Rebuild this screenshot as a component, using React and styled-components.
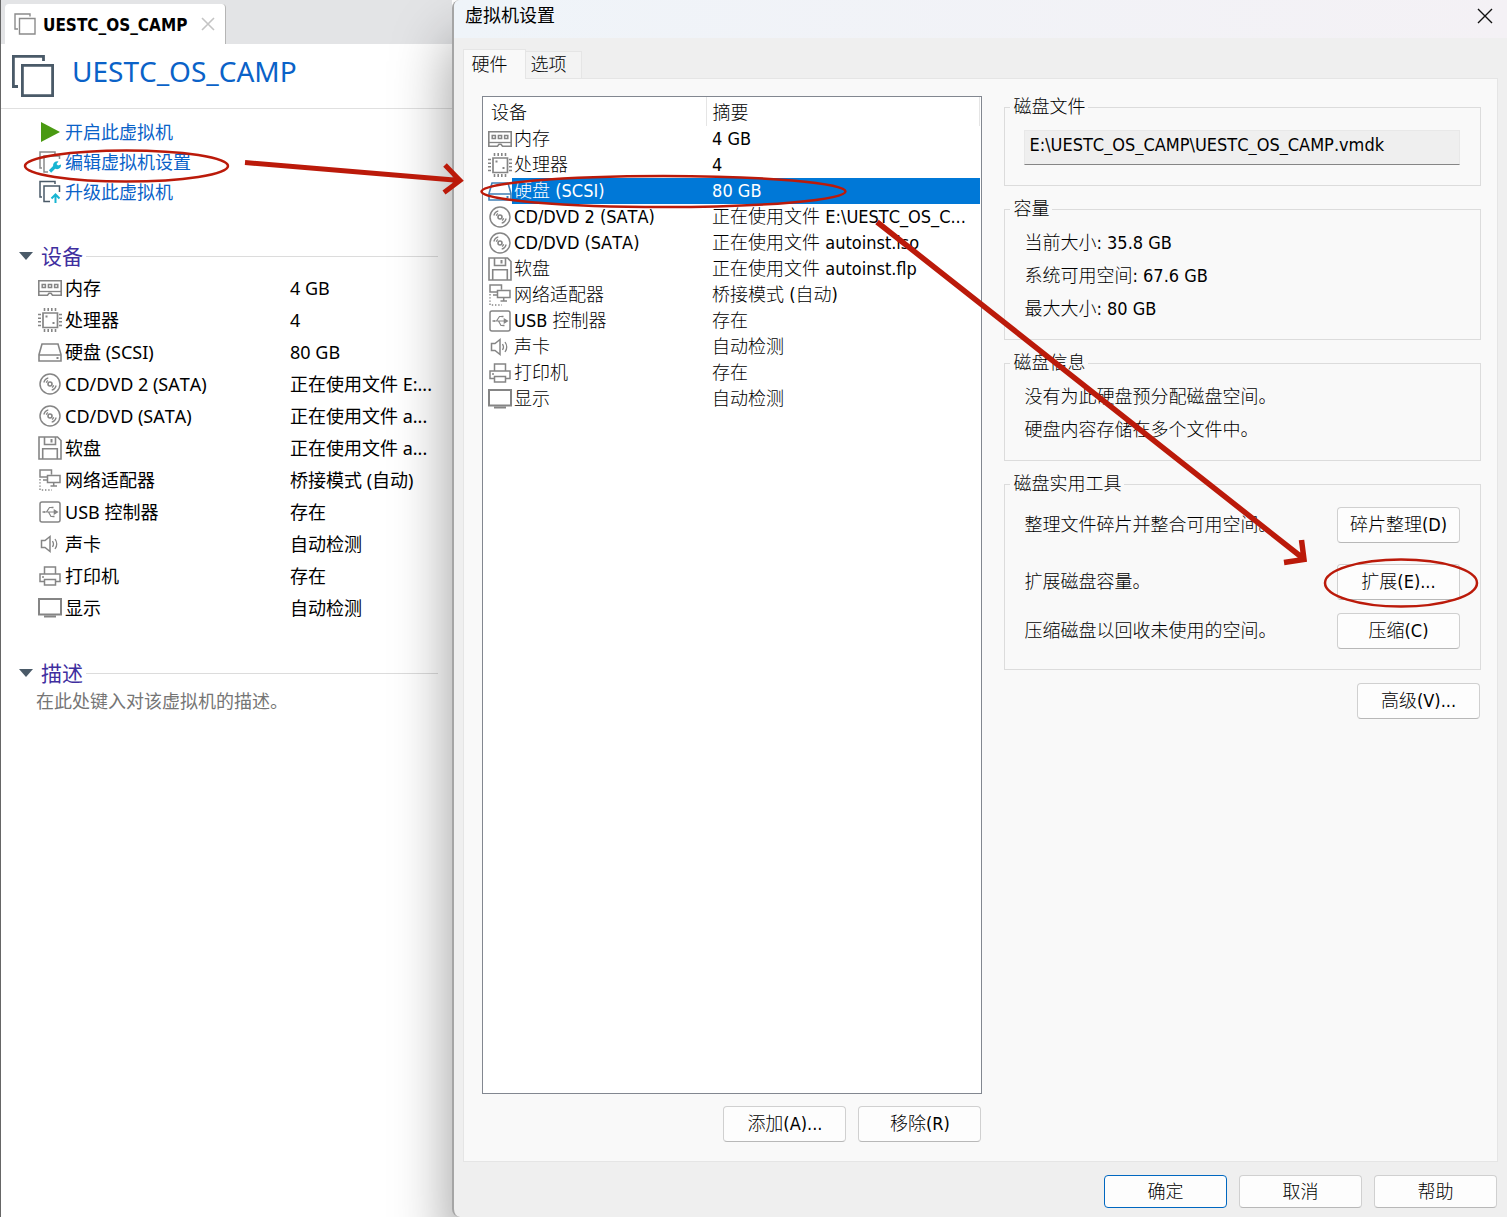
import React, { useState } from 'react';
import styled, { createGlobalStyle, css } from 'styled-components';

const UI_FONT = '"Noto Sans", "Noto Sans CJK SC", sans-serif';
const DIALOG_FONT = '"DejaVu Sans Condensed", "Noto Sans CJK SC", sans-serif';

const devices = [
    { icon: 'memory', name: '内存', short: '4 GB', summary: '4 GB' },
    { icon: 'cpu', name: '处理器', short: '4', summary: '4' },
    { icon: 'disk', name: '硬盘 (SCSI)', short: '80 GB', summary: '80 GB' },
    { icon: 'cd', name: 'CD/DVD 2 (SATA)', short: '正在使用文件 E:...', summary: '正在使用文件 E:\\UESTC_OS_C...' },
    { icon: 'cd', name: 'CD/DVD (SATA)', short: '正在使用文件 a...', summary: '正在使用文件 autoinst.iso' },
    { icon: 'floppy', name: '软盘', short: '正在使用文件 a...', summary: '正在使用文件 autoinst.flp' },
    { icon: 'network', name: '网络适配器', short: '桥接模式 (自动)', summary: '桥接模式 (自动)' },
    { icon: 'usb', name: 'USB 控制器', short: '存在', summary: '存在' },
    { icon: 'sound', name: '声卡', short: '自动检测', summary: '自动检测' },
    { icon: 'printer', name: '打印机', short: '存在', summary: '存在' },
    { icon: 'display', name: '显示', short: '自动检测', summary: '自动检测' },
];

const shapes = {
    memory: (
        <>
            <path d="M.8 4.8h22.4v14.4h-8.7L13 17.2h-2l-1.500 2H.8z" strokeWidth="1.6" />
            <path d="M1 15.5h22" strokeWidth="1.3" />
            <path d="M4.2 8.5h3.200v3H4.200zM10.400 8.500h3.200v3h-3.200zM16.600 8.500h3.200v3h-3.200z" strokeWidth="1.5" />
        </>
    ),
    cpu: (
        <>
            <path d="M5 5h14.5v14.5H5z" strokeWidth="1.7" />
            <path d="M6.5 0v3M10.2 0v3M13.8 0v3M17.5 0v3M6.5 21v3M10.2 21v3M13.8 21v3M17.5 21v3M0 6.5h3M0 10.2h3M0 13.8h3M0 17.5h3M21 6.5h3M21 10.2h3M21 13.8h3M21 17.5h3" strokeWidth="1.6" />
            <path d="M7.5 8.5h2M14.5 15h2" />
        </>
    ),
    disk: (
        <>
            <path d="M4 4h16l3 10.5V21H1v-6.5zM1 15h22" strokeWidth="1.6" />
            <path d="M18.5 18h2" />
        </>
    ),
    cd: (
        <>
            <circle cx="12" cy="12" r="10" strokeWidth="1.5" />
            <circle cx="12" cy="12" r="2" strokeWidth="1.6" />
            <path d="M5.8 10.5a6.500 6.500 0 0 1 4.500-4.700M8.300 10.700a4 4 0 0 1 1.700-2.200M18.200 13.500a6.500 6.500 0 0 1-4.500 4.700M15.700 13.300a4 4 0 0 1-1.700 2.200" strokeWidth="1.2" />
        </>
    ),
    floppy: (
        <>
            <path d="M1 1h18.5L23 4.5V23H1z" strokeWidth="1.6" />
            <path d="M6.5 1v7.5h11V1M4.7 23V12.7h14.6V23" strokeWidth="1.6" />
            <path d="M13.5 3v3.5" />
        </>
    ),
    network: (
        <>
            <path d="M9.5 9H2V2h11.5v4.5M9.5 7.5H22v7H9.500z" strokeWidth="1.5" />
            <path d="M15.7 14.5v3M12.500 18h6.500M5 12h4" strokeWidth="1.5" />
            <path d="M2 11v11h12" strokeWidth="1.4" strokeDasharray="1.4 1.8" />
        </>
    ),
    usb: (
        <>
            <rect x="2" y="2" width="20" height="20" rx="2" strokeWidth="1.5" />
            <path d="M6 12h12M8.500 12l3-4.500H14M10.500 12l2.500 4.500h2" strokeWidth="1.2" />
            <path d="M4.500 12h2.500M16.500 10.500l2.500 1.500-2.500 1.500zM13.500 7.500h2M14.500 16.500h2" strokeWidth="1.6" />
        </>
    ),
    sound: (
        <>
            <path d="M3.500 8.500h3.500L12 4.500v15L7 15.500H3.500z" strokeWidth="1.5" />
            <path d="M14.500 9q2 3 0 6M17 7q3.500 5 0 10" strokeWidth="1.3" />
        </>
    ),
    printer: (
        <>
            <path d="M6.500 10V3h11v7M6.500 17.500H2V10h20v7.500h-4.500" strokeWidth="1.5" />
            <path d="M6.500 15.500h11V21h-11z" strokeWidth="1.5" />
            <path d="M4 13h2" strokeWidth="1.3" />
        </>
    ),
    display: (
        <>
            <path d="M1 3h22v15.500H1z" />
            <path d="M6 20.500h12" />
        </>
    ),
};

function DeviceIcon({ name, active }) {
    return (
        <IconSvg viewBox="0 0 24 24" $active={active} aria-hidden="true">
            {shapes[name]}
        </IconSvg>
    );
}

function VmPanel() {
    return (
        <Machine>
            <TabStrip>
                <VmTab>
                    <svg width="22" height="22" viewBox="0 0 22 22" fill="none" stroke="#8b8b8b" strokeWidth="1.4" aria-hidden="true">
                        <path d="M4 16H1V1h15v2.500M5.500 5.500H21V21H5.500z" />
                    </svg>
                    <VmTabName>UESTC_OS_CAMP</VmTabName>
                    <TabClose aria-label="关闭标签页">
                        <svg width="14" height="14" viewBox="0 0 14 14" stroke="#c4c4c4" strokeWidth="1.6" aria-hidden="true">
                            <path d="M1 1l12 12M13 1L1 13" />
                        </svg>
                    </TabClose>
                </VmTab>
            </TabStrip>
            <VmHeader>
                <svg width="42" height="42" viewBox="0 0 42 42" fill="none" stroke="#4a5a68" strokeWidth="2.8" aria-hidden="true">
                    <path d="M6 31.500H1.400V1.400h30.100V6M10.400 10.400h30.200v30.200H10.400z" />
                </svg>
                <VmTitle>UESTC_OS_CAMP</VmTitle>
            </VmHeader>
            <Actions>
                <ActionLink href="#power">
                    <svg width="24" height="24" viewBox="0 0 24 24" aria-hidden="true">
                        <path d="M3 2l19 10L3 22z" fill="#4a9a12" />
                    </svg>
                    开启此虚拟机
                </ActionLink>
                <ActionLink href="#settings">
                    <svg width="24" height="24" viewBox="0 0 24 24" fill="none" aria-hidden="true">
                        <path d="M4 18H2V2h15v2M10 22H6V6h15.500v3" stroke="#8b8b8b" strokeWidth="1.5" />
                        <path d="M12 21.500l6-6" stroke="#18b5d2" strokeWidth="3.2" />
                        <path d="M20.500 11.500a4 4 0 1 0 2.500 3l-3 1-1.500-1.500z" fill="#18b5d2" />
                    </svg>
                    编辑虚拟机设置
                </ActionLink>
                <ActionLink href="#upgrade">
                    <svg width="24" height="24" viewBox="0 0 24 24" fill="none" aria-hidden="true">
                        <path d="M4 17H2V1.500h15V4M12 21.500H6V6h15.500v6" stroke="#4a5a68" strokeWidth="1.5" />
                        <path d="M17.500 23v-8M13.500 18.500l4-4 4 4" stroke="#18b5d2" strokeWidth="2" />
                    </svg>
                    升级此虚拟机
                </ActionLink>
            </Actions>
            <SectionHead>
                <Caret aria-hidden="true" />
                设备
            </SectionHead>
            <VmTable>
                <tbody>
                    {devices.map((d) => (
                        <tr key={d.name}>
                            <VmName scope="row">
                                <IconLabel>
                                    <DeviceIcon name={d.icon} />
                                    <VmLabel>{d.name}</VmLabel>
                                </IconLabel>
                            </VmName>
                            <VmValue>{d.short}</VmValue>
                        </tr>
                    ))}
                </tbody>
            </VmTable>
            <SectionHead>
                <Caret aria-hidden="true" />
                描述
            </SectionHead>
            <Description aria-label="描述" placeholder="在此处键入对该虚拟机的描述。" />
        </Machine>
    );
}

function SettingsDialog() {
    const [selected, setSelected] = useState(2);

    return (
        <Dialog role="dialog" aria-labelledby="dialog-title">
            <TitleBar>
                <DialogTitle id="dialog-title">虚拟机设置</DialogTitle>
                <CloseButton aria-label="关闭">
                    <svg width="16" height="16" viewBox="0 0 16 16" stroke="#111" strokeWidth="1.4" aria-hidden="true">
                        <path d="M1 1l14 14M15 1L1 15" />
                    </svg>
                </CloseButton>
            </TitleBar>
            <Tabs role="tablist">
                <Tab role="tab" aria-selected="true" $active>硬件</Tab>
                <Tab role="tab" aria-selected="false">选项</Tab>
            </Tabs>
            <Panel>
                <ListColumn>
                    <ListBox>
                        <DeviceTable>
                            <thead>
                                <tr>
                                    <HeadCell scope="col" $wide>设备</HeadCell>
                                    <HeadCell scope="col">摘要</HeadCell>
                                </tr>
                            </thead>
                            <tbody>
                                {devices.map((d, i) => (
                                    <DeviceRow key={d.name} $active={i === selected} onClick={() => setSelected(i)}>
                                        <NameCell>
                                            <IconLabel>
                                                <DeviceIcon name={d.icon} active={i === selected} />
                                                <RowLabel $active={i === selected}>{d.name}</RowLabel>
                                            </IconLabel>
                                        </NameCell>
                                        <SummaryCell>{d.summary}</SummaryCell>
                                    </DeviceRow>
                                ))}
                            </tbody>
                        </DeviceTable>
                    </ListBox>
                    <ButtonBar>
                        <Button>添加(A)...</Button>
                        <Button>移除(R)</Button>
                    </ButtonBar>
                </ListColumn>
                <DetailColumn>
                    <Group>
                        <Legend>磁盘文件</Legend>
                        <GroupBody $tool>
                            <FileField aria-label="磁盘文件" readOnly value="E:\UESTC_OS_CAMP\UESTC_OS_CAMP.vmdk" />
                        </GroupBody>
                    </Group>
                    <Group>
                        <Legend>容量</Legend>
                        <GroupBody>
                            <Line>当前大小: 35.8 GB</Line>
                            <Line>系统可用空间: 67.6 GB</Line>
                            <Line>最大大小: 80 GB</Line>
                        </GroupBody>
                    </Group>
                    <Group>
                        <Legend>磁盘信息</Legend>
                        <GroupBody>
                            <Line>没有为此硬盘预分配磁盘空间。</Line>
                            <Line>硬盘内容存储在多个文件中。</Line>
                        </GroupBody>
                    </Group>
                    <Group>
                        <Legend>磁盘实用工具</Legend>
                        <GroupBody $tool>
                            <ToolRow $spaced>
                                整理文件碎片并整合可用空间。
                                <Button>碎片整理(D)</Button>
                            </ToolRow>
                            <ToolRow>
                                扩展磁盘容量。
                                <Button>扩展(E)...</Button>
                            </ToolRow>
                            <ToolRow>
                                压缩磁盘以回收未使用的空间。
                                <Button>压缩(C)</Button>
                            </ToolRow>
                        </GroupBody>
                    </Group>
                    <ButtonBar $tight>
                        <Button>高级(V)...</Button>
                    </ButtonBar>
                </DetailColumn>
            </Panel>
            <Footer>
                <Button $short $primary>确定</Button>
                <Button $short>取消</Button>
                <Button $short>帮助</Button>
            </Footer>
        </Dialog>
    );
}

function Annotations() {
    return (
        <Marks aria-hidden="true" strokeWidth="2.5">
            <ellipse cx="126.5" cy="166" rx="101.5" ry="15.5" />
            <ellipse cx="663.5" cy="191.5" rx="182" ry="15.5" />
            <ellipse cx="1401" cy="583" rx="76" ry="23.5" />
            <path d="M245 162.500L460 180.500M445 165l15 15.500-16 12" strokeWidth="5" />
            <path d="M877 222l427 337M1301.500 540l2.500 19.500-20 3" strokeWidth="5.5" />
        </Marks>
    );
}

function App() {
    return (
        <Desktop>
            <GlobalStyle />
            <VmPanel />
            <SettingsDialog />
            <Annotations />
        </Desktop>
    );
}

const GlobalStyle = createGlobalStyle`
    *, *::before, *::after {
        box-sizing: border-box;
    }
    body {
        margin: 0;
        background: #fff;
        color: #000;
        font: 18px/24px ${UI_FONT};
        font-kerning: none;
    }
    button, input, textarea {
        font: inherit;
        font-kerning: none;
        color: inherit;
    }
    svg {
        display: block;
        flex: none;
    }
`;

const Desktop = styled.div`
    position: relative;
    display: grid;
    grid-template-columns: minmax(0, 3fr) minmax(0, 7fr);
    min-height: 100vh;
    overflow: hidden;
`;

const Marks = styled.svg`
    position: absolute;
    inset: 0;
    width: 100%;
    height: 100%;
    fill: none;
    stroke: #bb1a0a;
    pointer-events: none;
`;

const IconSvg = styled.svg`
    width: 24px;
    height: 24px;
    fill: none;
    stroke: ${(p) => (p.$active ? '#3f7fb5' : '#858585')};
    stroke-width: 2;
`;

const Machine = styled.main`
    display: flex;
    flex-direction: column;
    border-left: 1px solid #666;
`;

const TabStrip = styled.div`
    display: flex;
    align-items: flex-end;
    height: 44px;
    padding-left: 4px;
    background: #e3e4e6;
`;

const VmTab = styled.div`
    display: flex;
    align-items: center;
    height: 40px;
    padding: 0 10px 0 9px;
    background: #fff;
    border-right: 1px solid #b5b5b5;
    border-radius: 4px 4px 0 0;
`;

const VmTabName = styled.span`
    margin: 0 14px 0 7px;
    padding-top: 2px;
    font: bold 17px/24px ${DIALOG_FONT};
`;

const TabClose = styled.button`
    padding: 0;
    border: 0;
    background: none;
`;

const VmHeader = styled.header`
    display: flex;
    gap: 18px;
    height: 65px;
    padding: 11px 0 0 11px;
    border-bottom: 1px solid #e0e0e0;
`;

const VmTitle = styled.h1`
    margin: 0;
    color: #0a62c8;
    font-size: 28px;
    font-weight: 400;
    line-height: 32px;
`;

const Actions = styled.nav`
    display: flex;
    flex-direction: column;
    align-items: flex-start;
    padding: 8px 0 0 37px;
`;

const ActionLink = styled.a`
    display: flex;
    align-items: center;
    gap: 3px;
    height: 30px;
    color: #0a62c8;
    text-decoration: none;
`;

const SectionHead = styled.h2`
    display: flex;
    align-items: center;
    height: 30px;
    margin: 34px 14px 1px 18px;
    color: #3f2fa0;
    font-size: 21px;
    font-weight: 400;
    &::after {
        content: '';
        flex: 1;
        height: 1px;
        margin-left: 3px;
        background: #dcdcdc;
    }
`;

const Caret = styled.span`
    margin-right: 8px;
    border: 7px solid transparent;
    border-top: 8px solid #4a5a68;
    border-bottom: 0;
`;

const VmTable = styled.table`
    width: 100%;
    border-collapse: collapse;
    table-layout: fixed;
`;

const VmName = styled.th`
    width: 289px;
    height: 32px;
    padding: 0 0 0 37px;
    font-weight: 400;
    text-align: left;
`;

const VmValue = styled.td`
    padding: 0;
    white-space: nowrap;
`;

const VmLabel = styled.span`
    padding-left: 3px;
`;

const IconLabel = styled.div`
    display: flex;
    align-items: center;
`;

const Description = styled.textarea`
    height: 60px;
    margin: 0 14px 0 35px;
    padding: 0;
    border: 0;
    background: none;
    resize: none;
    &::placeholder {
        color: #757575;
        opacity: 1;
    }
`;

const Dialog = styled.section`
    position: relative;
    display: flex;
    flex-direction: column;
    border-left: 2px solid #a5a5a5;
    border-radius: 8px 0 0 8px;
    background: #efefef;
    box-shadow: 0 40px 60px rgba(0, 0, 0, 0.4);
    font-family: ${DIALOG_FONT};
`;

const TitleBar = styled.header`
    display: flex;
    align-items: center;
    justify-content: space-between;
    height: 38px;
    padding: 0 14px 6px 11px;
    border-radius: 6px 0 0 0;
    background: linear-gradient(90deg, #eff4f9, #f4f1f5);
`;

const DialogTitle = styled.h2`
    margin: 0;
    font-size: 18px;
    font-weight: 400;
`;

const CloseButton = styled.button`
    padding: 0;
    border: 0;
    background: none;
`;

const Tabs = styled.div`
    display: flex;
    align-items: flex-end;
    height: 41px;
    margin-bottom: -1px;
    padding-left: 9px;
`;

const Tab = styled.button`
    z-index: 1;
    width: 56px;
    height: 28px;
    padding: 0 10px 0 0;
    border: 1px solid #e5e5e5;
    border-left: 0;
    background: #f3f3f3;
    font-weight: 300;
    ${(p) => p.$active && css`
        width: 63px;
        height: 30px;
        border-left: 1px solid #e5e5e5;
        border-bottom: 0;
        background: #f9f9f9;
    `}
`;

const Panel = styled.div`
    display: grid;
    flex: 1;
    grid-template-columns: minmax(0, 21fr) minmax(0, 20fr);
    gap: 22px;
    margin: 0 9px;
    padding: 17px 16px 19px 18px;
    border: 1px solid #e5e5e5;
    background: #f9f9f9;
    font-weight: 300;
`;

const ListColumn = styled.div`
    display: flex;
    flex-direction: column;
`;

const ListBox = styled.div`
    flex: 1;
    padding-right: 1px;
    border: 1px solid #828790;
    background: #fff;
`;

const DeviceTable = styled.table`
    width: 100%;
    border-collapse: collapse;
    table-layout: fixed;
`;

const HeadCell = styled.th`
    width: ${(p) => (p.$wide ? '223px' : 'auto')};
    height: 29px;
    padding: 2px 0 0 ${(p) => (p.$wide ? '8px' : '6px')};
    border-right: 1px solid #e5e5e5;
    font-weight: 300;
    text-align: left;
`;

const DeviceRow = styled.tr`
    ${(p) => p.$active && css`
        color: #fff;
        td:last-child {
            background: #0078d7;
        }
    `}
`;

const NameCell = styled.td`
    height: 26px;
    padding: 0 0 0 5px;
`;

const SummaryCell = styled.td`
    padding: 0 0 0 6px;
    overflow: hidden;
    white-space: nowrap;
`;

const RowLabel = styled.span`
    flex: 1;
    padding-left: 2px;
    line-height: 26px;
    background: ${(p) => (p.$active ? '#0078d7' : 'none')};
`;

const ButtonBar = styled.div`
    display: flex;
    justify-content: flex-end;
    gap: 12px;
    padding: ${(p) => (p.$tight ? '1px' : '12px')} 1px 0 0;
`;

const Button = styled.button`
    width: 123px;
    height: ${(p) => (p.$short ? '33px' : '36px')};
    padding: 0;
    border: 1px solid ${(p) => (p.$primary ? '#0067c0' : '#d0d0d0')};
    border-bottom-color: ${(p) => (p.$primary ? '#0067c0' : '#b8b8b8')};
    border-radius: 4px;
    background: #fdfdfd;
    font-weight: 300;
`;

const DetailColumn = styled.div`
    display: flex;
    flex-direction: column;
`;

const Group = styled.fieldset`
    min-width: 0;
    margin: 1px 0 12px;
    padding: 0;
    border: 1px solid #dcdcdc;
`;

const Legend = styled.legend`
    margin-left: 5px;
    padding: 0 3px;
    line-height: 20px;
`;

const GroupBody = styled.div`
    display: flex;
    flex-direction: column;
    padding: ${(p) => (p.$tool ? '13px 20px 20px 19px' : '7px 20px 14px 19px')};
`;

const FileField = styled.input`
    width: 100%;
    height: 35px;
    padding: 0 4px 6px;
    border: 1px solid #e8e8e8;
    border-bottom-color: #868686;
    background: #efefef;
    font-weight: 400;
`;

const Line = styled.p`
    margin: 0;
    line-height: 33px;
`;

const ToolRow = styled.div`
    display: flex;
    align-items: center;
    justify-content: space-between;
    margin-bottom: ${(p) => (p.$spaced ? '21px' : '0')};
    & + &:last-child {
        margin-top: 13px;
    }
`;

const Footer = styled.footer`
    display: flex;
    justify-content: flex-end;
    gap: 12px;
    padding: 13px 10px 9px;
`;

export default App;
